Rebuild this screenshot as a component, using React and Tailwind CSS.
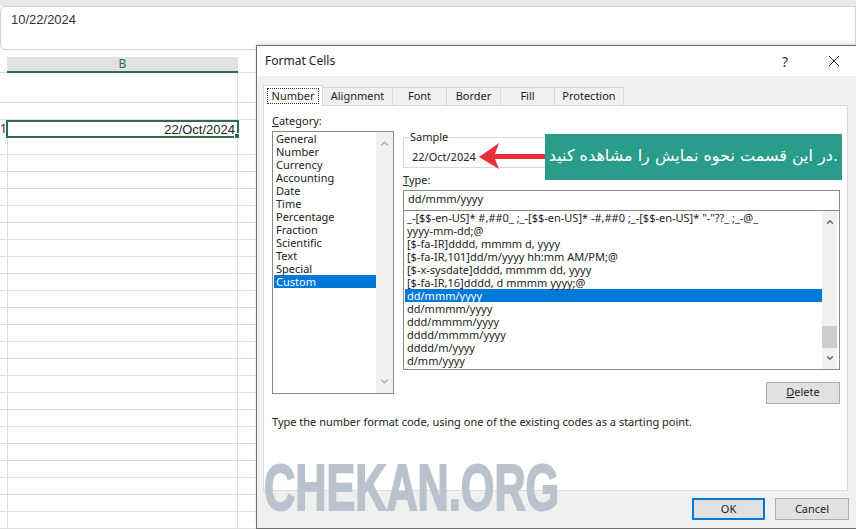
import React from "react";
import { ChevronUp, ChevronDown } from "lucide-react";

const categories = ["General","Number","Currency","Accounting","Date","Time","Percentage","Fraction","Scientific","Text","Special","Custom"];
const formats = [
  '_-[$$-en-US]* #,##0_ ;_-[$$-en-US]* -#,##0 ;_-[$$-en-US]* "-"??_ ;_-@_',
  "yyyy-mm-dd;@",
  "[$-fa-IR]dddd, mmmm d, yyyy",
  "[$-fa-IR,101]dd/m/yyyy hh:mm AM/PM;@",
  "[$-x-sysdate]dddd, mmmm dd, yyyy",
  "[$-fa-IR,16]dddd, d mmmm yyyy;@",
  "dd/mmm/yyyy",
  "dd/mmmm/yyyy",
  "ddd/mmmm/yyyy",
  "dddd/mmmm/yyyy",
  "dddd/m/yyyy",
  "d/mm/yyyy",
];
const tabs = [["Alignment","w-[70px]"],["Font","w-[54px]"],["Border","w-[54px]"],["Fill","w-[54px]"],["Protection","w-[69px]"]];

function SheetRow({ h, children }) {
  return <div className={`flex border-b border-[#dedede] ${h}`}>{children}</div>;
}

export default function App() {
  return (
    <div className="relative w-[856px] h-[529px] overflow-hidden bg-white font-['Noto_Sans','Liberation_Sans',sans-serif] text-[11px] text-[#222]">
      {/* Excel background */}
      <div className="h-[6px] bg-[#e9e9e9]" />
      <div className="h-[44px] pl-[10px] pt-[3px] bg-white border border-[#d2d2d2] rounded-l-[5px] font-['Liberation_Sans',sans-serif] text-[13px] text-[#333]">10/22/2024</div>
      <div className="pt-[7px]">
        <div className="flex h-[16px] border-b border-[#dedede]">
          <div className="ml-[7px] w-[231px] h-[16px] bg-[#e1e1e1] border-b-2 border-[#2f6b4f] text-center text-[#2f6b4f] text-[12px] leading-[14px]">B</div>
        </div>
        <SheetRow h="h-[30px]"><div className="ml-[7px] w-[231px] border-r border-[#dedede]" /></SheetRow>
        <SheetRow h="h-[17px]"><div className="ml-[7px] w-[231px] border-r border-[#dedede]" /></SheetRow>
        <div className="flex h-[18px]">
          <div className="w-[6px] pr-[2px] text-right text-[12px] leading-[18px] overflow-hidden shrink-0">1</div>
          <div className="relative w-[233px] border-2 border-[#2f6b4f] text-right pr-[2px] leading-[16px] text-[13px] text-[#222] font-['Liberation_Sans',sans-serif]">
            22/Oct/2024
            <span className="absolute -right-[3px] -bottom-[3px] w-[6px] h-[6px] bg-[#2f6b4f] border border-white" />
          </div>
        </div>
        {Array.from({ length: 23 }).map((_, i) => (
          <SheetRow key={i} h="h-[17px]"><div className="ml-[7px] w-[231px] border-x border-[#dedede]" /></SheetRow>
        ))}
      </div>

      {/* Format Cells dialog */}
      <div className="absolute left-[256px] top-[45px] w-[600px] h-[484px] flex flex-col bg-[#f0f0f0] border border-[#6e6e6e] border-r-0 shadow-[0_-2px_4px_rgba(0,0,0,0.12)]">
        <div className="flex items-center h-[30px] shrink-0 bg-white pl-[8px] text-[12px] text-[#222]">
          <span>Format Cells</span>
          <span className="ml-auto mr-[40px] text-[14px] text-[#333]">?</span>
          <svg className="mr-[16px]" width="12" height="12" viewBox="0 0 12 12" fill="none" stroke="#333" strokeWidth="1"><path d="M1 1l10 10M11 1L1 11" /></svg>
        </div>
        <div className="flex-1 pl-[6px] pt-[8px] w-[591px] flex flex-col">
          <div className="flex items-end h-[21px] relative z-10">
            <div className="w-[60px] h-[21px] -mb-px bg-white border border-b-0 border-[#d9d9d9] pl-[3px] pt-[2px]">
              <span className="block w-[52px] h-[16px] border border-dotted border-[#333] text-center leading-[13px]">Number</span>
            </div>
            {tabs.map(([t, w]) => (
              <div key={t} className={`${w} h-[18px] bg-[#f0f0f0] border border-l-0 border-b-0 border-[#d9d9d9] text-center leading-[16px]`}>{t}</div>
            ))}
          </div>
          <div className="h-[386px] bg-white border border-[#d9d9d9] pl-[8px] pr-[6px]">
            <div className="flex gap-[9px]">
              <div className="w-[122px] pt-[9px]">
                <div className="h-[16px] leading-[12px]"><u>C</u>ategory:</div>
                <div className="flex h-[263px] border border-[#8a8a8a] pl-[1px]">
                  <div className="flex-1">
                    {categories.map((c) => (
                      <div key={c} className={`h-[13px] leading-[13px] pl-[2px] ${c === "Custom" ? "bg-[#0078d7] text-white" : ""}`}>{c}</div>
                    ))}
                  </div>
                  <div className="w-[17px] bg-[#f0f0f0] flex flex-col items-center justify-between py-[6px] text-[#a6a6a6]">
                    <ChevronUp size={11} strokeWidth={3} />
                    <ChevronDown size={11} strokeWidth={3} />
                  </div>
                </div>
              </div>
              <div className="w-[437px] pt-[31px]">
                <div className="relative h-[31px] border border-[#d9d9d9] pl-[8px] pt-[12px] leading-[14px]">
                  <span className="absolute left-[5px] -top-[8px] bg-white px-[1px] leading-[13px]">Sample</span>
                  22/Oct/2024
                </div>
                <div className="h-[22px] pt-[5px] leading-[14px]"><u>T</u>ype:</div>
                <div className="h-[21px] border border-[#8a8a8a] pl-[4px] leading-[16px]">dd/mmm/yyyy</div>
                <div className="flex h-[160px] -mt-px border border-[#8a8a8a] pl-[1px]">
                  <div className="flex-1">
                    {formats.map((f) => (
                      <div key={f} className={`h-[13px] leading-[13px] pl-[2px] whitespace-nowrap ${f === "dd/mmm/yyyy" ? "bg-[#0078d7] text-white" : ""}`}>{f}</div>
                    ))}
                  </div>
                  <div className="w-[15px] mr-[2px] bg-[#f0f0f0] flex flex-col items-center py-[6px] text-[#606060]">
                    <ChevronUp size={10} strokeWidth={3} />
                    <div className="w-full h-[22px] mt-[99px] bg-[#cdcdcd]" />
                    <ChevronDown className="mt-[5px]" size={10} strokeWidth={3} />
                  </div>
                </div>
                <div className="flex justify-end mt-[12px]">
                  <div className="w-[74px] h-[22px] bg-[#e1e1e1] border border-[#adadad] text-center leading-[18px]"><u>D</u>elete</div>
                </div>
              </div>
            </div>
            <div className="mt-[11px] leading-[14px]">Type the number format code, using one of the existing codes as a starting point.</div>
          </div>
        </div>
        <div className="absolute right-[7px] bottom-[8px] flex gap-[10px]">
          <div className="w-[73px] h-[22px] bg-[#e1e1e1] border-2 border-[#0078d7] text-center leading-[18px]">OK</div>
          <div className="w-[74px] h-[22px] bg-[#e1e1e1] border border-[#adadad] text-center leading-[20px]">Cancel</div>
        </div>
      </div>

      {/* Annotation */}
      <svg className="absolute left-[478px] top-[142px]" width="68" height="28" viewBox="0 0 68 28" fill="#e8303a">
        <path d="M1 15 L21 1 L17 12 H68 V17 H17 L21 27 Z" />
      </svg>
      <div dir="rtl" className="absolute left-[545px] top-[134px] w-[297px] h-[46px] bg-[#2a9d8a] text-white text-[16px] leading-[44px] pr-[4px] whitespace-nowrap overflow-hidden font-['DejaVu_Sans',sans-serif]">.در این قسمت نحوه نمایش را مشاهده کنید</div>

      {/* Watermark */}
      <div className="absolute left-[264px] top-[453px] origin-left scale-x-[0.675] text-[64px] leading-[70px] font-bold text-[#bac3cd] [-webkit-text-stroke:2px_#bac3cd] font-['Liberation_Sans',sans-serif] whitespace-nowrap">CHEKAN.ORG</div>
    </div>
  );
}
